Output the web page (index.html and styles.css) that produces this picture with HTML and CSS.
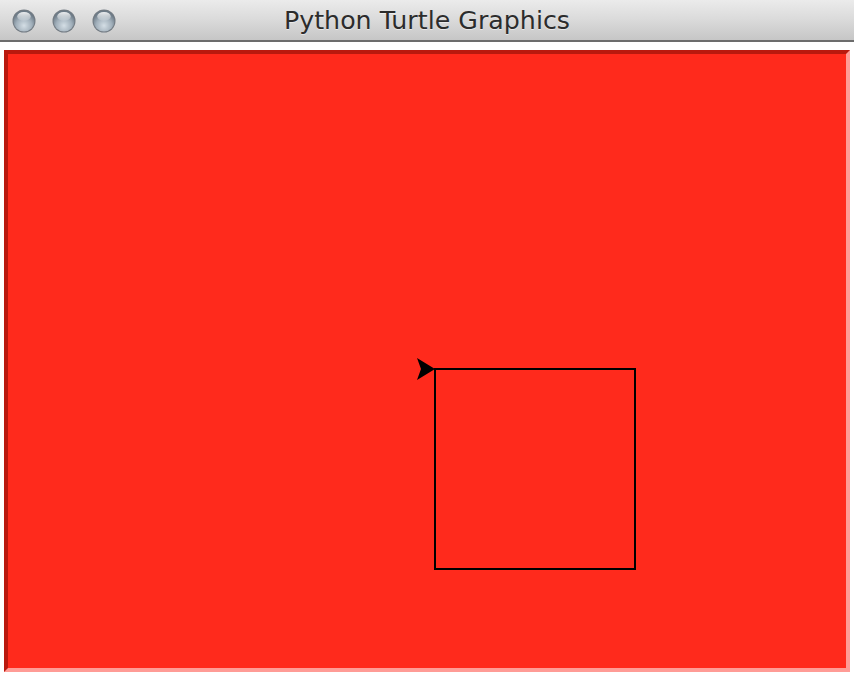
FILE: index.html
```html
<!DOCTYPE html>
<html>
<head>
<meta charset="utf-8">
<title>Python Turtle Graphics</title>
<link rel="stylesheet" href="styles.css">
</head>
<body>
<div class="window">
  <header class="titlebar">
    <div class="lights">
      <svg class="light" viewBox="0 0 24 24" width="24" height="24">
        <defs>
          <radialGradient id="lg" cx="50%" cy="72%" r="62%">
            <stop offset="0" stop-color="#d4dee5"/>
            <stop offset="0.6" stop-color="#a2b0bb"/>
            <stop offset="1" stop-color="#6d7b87"/>
          </radialGradient>
          <linearGradient id="hl" x1="0" y1="0" x2="0" y2="1">
            <stop offset="0" stop-color="#ffffff" stop-opacity="0.9"/>
            <stop offset="1" stop-color="#ffffff" stop-opacity="0.1"/>
          </linearGradient>
        </defs>
        <circle cx="12" cy="12" r="11.5" fill="#737b83"/>
        <circle cx="12" cy="12" r="10.5" fill="url(#lg)"/>
        <ellipse cx="12" cy="7.4" rx="6.8" ry="4.4" fill="url(#hl)"/>
      </svg>
      <svg class="light" viewBox="0 0 24 24" width="24" height="24">
        <circle cx="12" cy="12" r="11.5" fill="#737b83"/>
        <circle cx="12" cy="12" r="10.5" fill="url(#lg)"/>
        <ellipse cx="12" cy="7.4" rx="6.8" ry="4.4" fill="url(#hl)"/>
      </svg>
      <svg class="light" viewBox="0 0 24 24" width="24" height="24">
        <circle cx="12" cy="12" r="11.5" fill="#737b83"/>
        <circle cx="12" cy="12" r="10.5" fill="url(#lg)"/>
        <ellipse cx="12" cy="7.4" rx="6.8" ry="4.4" fill="url(#hl)"/>
      </svg>
    </div>
    <h1 class="title">Python Turtle Graphics</h1>
    <div class="spacer"></div>
  </header>
  <main class="canvas">
    <svg class="drawing" viewBox="0 0 838 614" width="838" height="614">
      <rect x="427" y="315" width="200" height="200" fill="none" stroke="#000" stroke-width="2"/>
      <polygon points="427,315 409,304 413,315 409,326" fill="#000"/>
    </svg>
  </main>
</div>
</body>
</html>
```
FILE: styles.css
```css
html, body {
  margin: 0;
  padding: 0;
  background: #ffffff;
}
.window {
  width: 854px;
  height: 676px;
  display: flex;
  flex-direction: column;
}
.titlebar {
  height: 40px;
  border-bottom: 2px solid #6c6c6c;
  background: linear-gradient(to bottom, #ebebeb 0%, #dadada 50%, #c6c6c6 100%);
  display: grid;
  grid-template-columns: 1fr auto 1fr;
  align-items: center;
}
.lights {
  display: flex;
  gap: 16px;
  padding-left: 12px;
  padding-top: 1px;
}
.light {
  display: block;
}
.title {
  margin: 0;
  padding-top: 1px;
  font-family: "DejaVu Sans", sans-serif;
  font-weight: normal;
  font-size: 25.3px;
  line-height: 39px;
  color: #2c2c2c;
  text-shadow: 0 1px 0 rgba(255, 255, 255, 0.5);
  white-space: nowrap;
}
.canvas {
  margin: 8px 0 0 4px;
  width: 846px;
  height: 622px;
  box-sizing: border-box;
  border-style: solid;
  border-width: 4px;
  border-color: #b9190e #ff9c96 #ff9c96 #b9190e;
  background: #ff2a1c;
}
.drawing {
  display: block;
}
```
